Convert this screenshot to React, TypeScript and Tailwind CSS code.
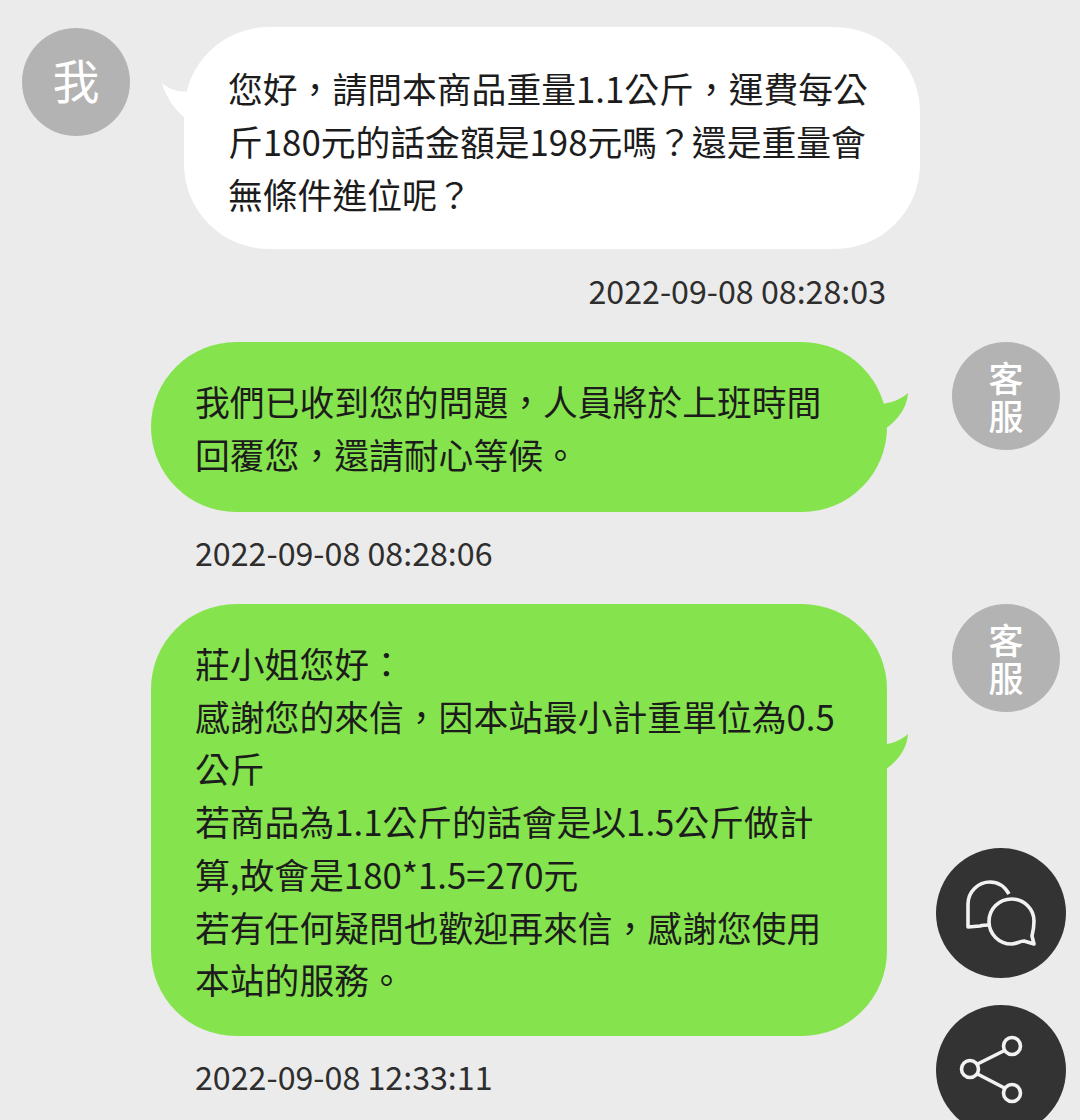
const font = "font-['Noto_Sans_CJK_TC','Noto_Sans_CJK_JP',sans-serif]";

function StaffAvatar() {
  return (
    <div className="flex h-[108px] w-[108px] shrink-0 items-center justify-center rounded-full bg-[#b3b3b3] pt-[6px] text-[35px] font-medium leading-none tracking-[3px] text-white [writing-mode:vertical-rl]">
      客服
    </div>
  );
}

function GreenTail() {
  return (
    <svg className="absolute left-[730px] top-[calc(30%-6px)]" width="32" height="44" viewBox="0 0 32 44">
      <path d="M0 17 C10 16 19 13 27 6 C26 20 18 32 4 42 Z" fill="#85e34d" />
    </svg>
  );
}

function StaffMessage({ lines, time, bubbleHeight }: { lines: string[]; time: string; bubbleHeight: string }) {
  return (
    <>
      <div className="flex pl-[151px]">
        <div className={`relative w-[736px] rounded-[85px] bg-[#85e34d] pl-[44px] pr-[20px] pt-[33px] text-[34.8px] leading-[52.7px] text-[#1c1c1c] ${bubbleHeight}`}>
          <GreenTail />
          {lines.map((l) => (
            <div key={l} className="whitespace-nowrap">{l}</div>
          ))}
        </div>
        <div className="ml-[65px]">
          <StaffAvatar />
        </div>
      </div>
      <div className="mt-[15px] h-[53px] pl-[195px] text-[32.2px] leading-[51px] text-[#2e2e2e]">{time}</div>
    </>
  );
}

export default function App() {
  return (
    <div className={`relative h-[1120px] w-[1080px] overflow-hidden bg-[#ebebeb] pt-[27px] ${font}`}>
      <div className="flex pl-[22px]">
        <div className="mt-px flex h-[108px] w-[108px] shrink-0 items-center justify-center rounded-full bg-[#b3b3b3] pb-[8px] text-[47px] leading-none text-white">
          我
        </div>
        <div className="relative ml-[54px] w-[736px] rounded-[85px] bg-white pb-[28px] pl-[44px] pr-[20px] pt-[35px] text-[34.8px] leading-[53px] text-[#1c1c1c]">
          <svg className="absolute left-[-24px] top-[52px]" width="40" height="46" viewBox="0 0 40 46">
            <path d="M2 4 C10 11 20 14 32 12 L24 38 C14 30 6 18 2 4 Z" fill="#fff" />
          </svg>
          <div className="whitespace-nowrap">您好，請問本商品重量1.1公斤，運費每公</div>
          <div className="whitespace-nowrap">斤180元的話金額是198元嗎？還是重量會</div>
          <div className="whitespace-nowrap">無條件進位呢？</div>
        </div>
      </div>
      <div className="mb-[24px] mt-[16px] h-[53px] pr-[194px] text-right text-[32.2px] leading-[51px] text-[#2e2e2e]">
        2022-09-08 08:28:03
      </div>

      <div className="mb-[24px]">
        <StaffMessage
          bubbleHeight="h-[170px]"
          lines={["我們已收到您的問題，人員將於上班時間", "回覆您，還請耐心等候。"]}
          time="2022-09-08 08:28:06"
        />
      </div>

      <StaffMessage
        bubbleHeight="h-[432px]"
        lines={[
          "莊小姐您好：",
          "感謝您的來信，因本站最小計重單位為0.5",
          "公斤",
          "若商品為1.1公斤的話會是以1.5公斤做計",
          "算,故會是180*1.5=270元",
          "若有任何疑問也歡迎再來信，感謝您使用",
          "本站的服務。",
        ]}
        time="2022-09-08 12:33:11"
      />

      <div className="absolute left-[936px] top-[848px] flex flex-col gap-[27px]">
        <div className="h-[130px] w-[130px] rounded-full bg-[#333]">
          <svg width="130" height="130" viewBox="0 0 130 130" fill="none" stroke="#f2f2f2" strokeWidth="3.6" strokeLinejoin="round">
            <path d="M73 46 C69 39 62 34 54 34 C42 34 32 44 32 56 V79 L44 78 C47 77 50 77 54 77" />
            <path d="M98 96 L96 88 C97 84 98 80 98 73 C98 61 88 51 75.5 51 C63 51 53 61 53 73.5 C53 86 63 96 75.5 96 C80 96 84 93 88 93 Z" />
          </svg>
        </div>
        <div className="h-[130px] w-[130px] rounded-full bg-[#333]">
          <svg width="130" height="130" viewBox="0 0 130 130" fill="none" stroke="#f2f2f2" strokeWidth="3.6">
            <circle cx="76" cy="41" r="8.5" />
            <circle cx="34" cy="64" r="8.5" />
            <circle cx="76" cy="88" r="8.5" />
            <path d="M41.5 59 L68.5 45.5 M41.5 69 L68.5 83" />
          </svg>
        </div>
      </div>
    </div>
  );
}
